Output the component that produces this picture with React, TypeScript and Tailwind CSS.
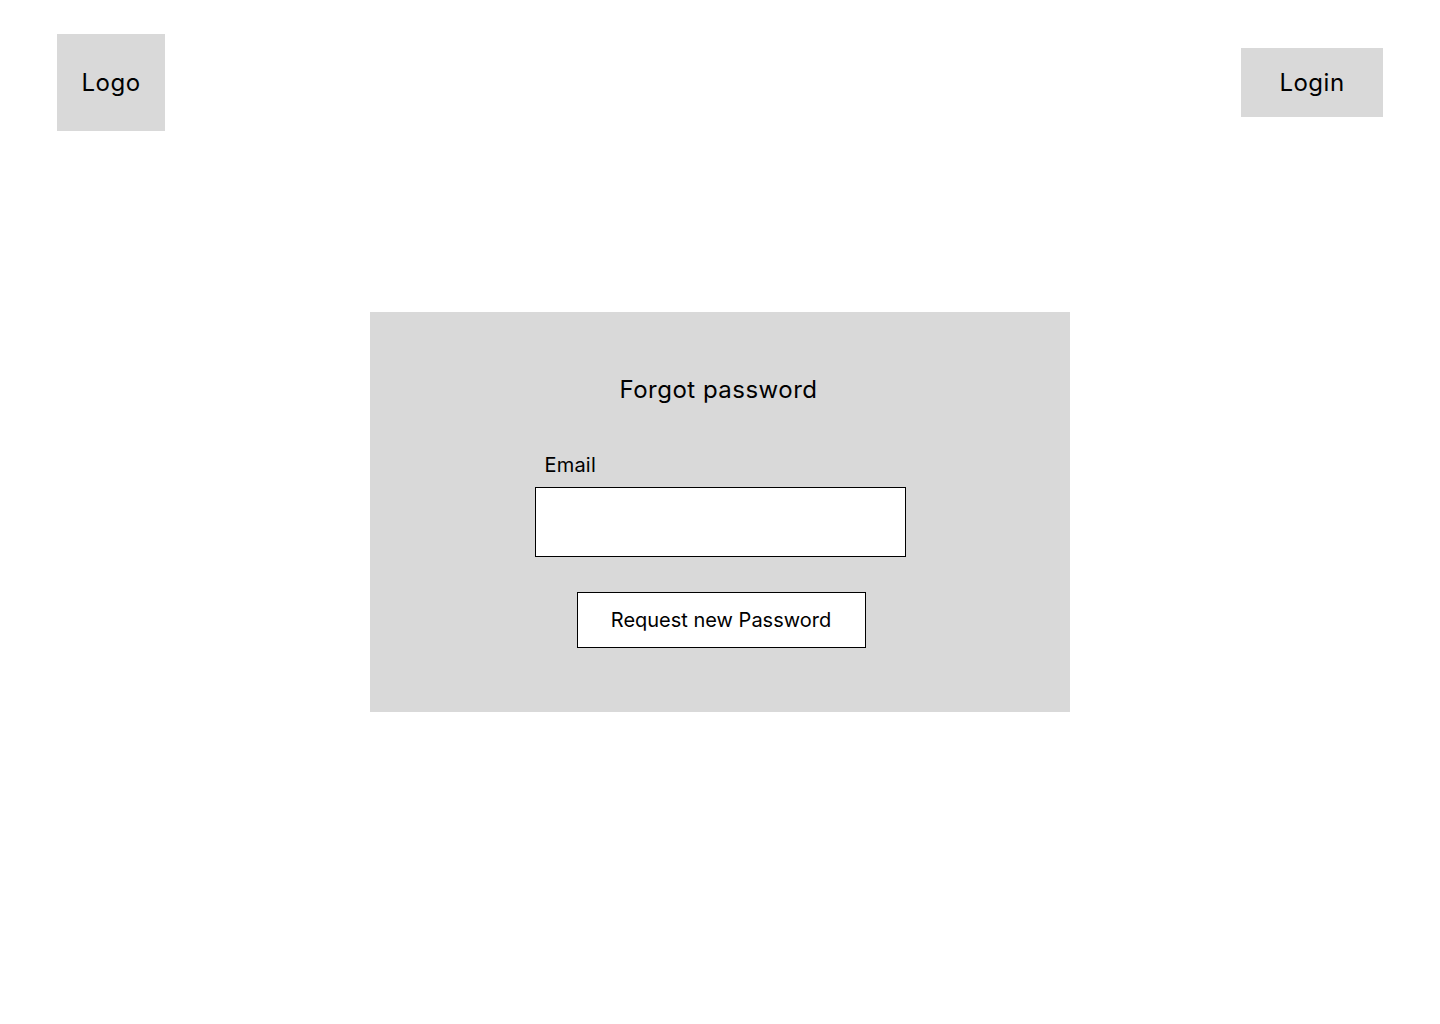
export default function App() {
  return (
    <div className="min-h-[1024px] w-[1440px] bg-white text-black" style={{ fontFamily: "Inter, 'Noto Sans', sans-serif" }}>
      <header className="flex items-start justify-between px-[57px] pt-[34px]">
        <div className="flex h-[97px] w-[108px] items-center justify-center bg-[#d9d9d9] text-[24px] leading-[24px] tracking-[0.5px]">
          Logo
        </div>
        <div className="mt-[14px] flex h-[69px] w-[142px] items-center justify-center bg-[#d9d9d9] text-[24px] leading-[24px] tracking-[0.5px]">
          Login
        </div>
      </header>
      <main className="flex justify-center pt-[181px]">
        <div className="flex h-[400px] w-[700px] flex-col items-center bg-[#d9d9d9] pt-[66px]">
          <h1 className="pr-[3px] text-[24px] leading-[24px] font-normal tracking-[0.5px]">Forgot password</h1>
          <div className="mt-[53px] flex w-[371px] flex-col">
            <label className="pl-[10px] text-[20px] leading-[20px] tracking-[0.2px]">Email</label>
            <input className="mt-[12px] h-[70px] w-[371px] border border-black bg-white outline-none" />
          </div>
          <button className="mt-[35px] ml-[2px] flex h-[56px] w-[289px] items-center justify-center border border-black bg-white text-[20px] leading-[20px]">
            Request new Password
          </button>
        </div>
      </main>
    </div>
  );
}
